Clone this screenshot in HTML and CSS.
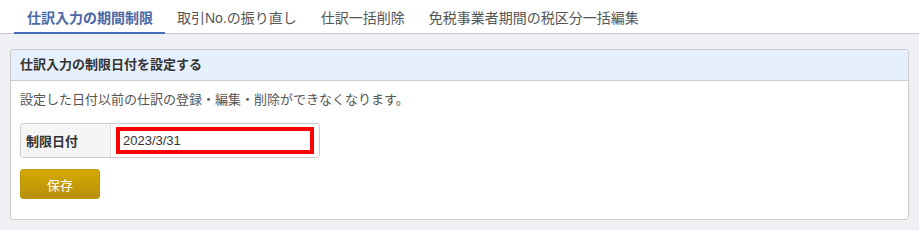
FILE: index.html
```html
<!DOCTYPE html>
<html lang="ja">
<head>
  <meta charset="UTF-8" />
  <title>仕訳入力の期間制限</title>
  <link rel="stylesheet" href="styles.css">
</head>
<body>
  <nav class="tabs">
    <a class="tab active" href="#">仕訳入力の期間制限</a>
    <a class="tab" href="#">取引No.の振り直し</a>
    <a class="tab" href="#">仕訳一括削除</a>
    <a class="tab" href="#">免税事業者期間の税区分一括編集</a>
  </nav>

  <main class="content">
    <section class="panel">
      <div class="panel-header">仕訳入力の制限日付を設定する</div>
      <div class="panel-body">
        <p class="note">設定した日付以前の仕訳の登録・編集・削除ができなくなります。</p>
        <div class="field-table">
          <div class="field-label">制限日付</div>
          <div class="field-value">
            <input type="text" class="date-input" value="2023/3/31">
          </div>
        </div>
        <button type="button" class="btn-save">保存</button>
      </div>
    </section>
  </main>
</body>
</html>
```

FILE: styles.css
```css
body {
  margin: 0;
  font-family: "Liberation Sans", "Noto Sans CJK JP", sans-serif;
  background: #eff0f4;
  color: #333;
  height: 230px;
  overflow: hidden;
}

.tabs {
  display: flex;
  background: #fff;
  border-bottom: 1px solid #c8c8c8;
  padding-left: 14px;
  height: 33px;
}

.tab {
  display: flex;
  align-items: center;
  padding: 1px 12px 0;
  font-size: 14px;
  color: #555;
  text-decoration: none;
  border-bottom: 2px solid transparent;
  margin-bottom: -1px;
}

.tab.active {
  color: #4a68a6;
  font-weight: bold;
  border-bottom-color: #4a6cb3;
  padding: 1px 12px 0 13px;
}

.content {
  padding: 15px 10px 0 10px;
}

.panel {
  background: #fff;
  border: 1px solid #ccc;
  border-radius: 3px;
  height: 171px;
  box-sizing: border-box;
}

.panel-header {
  background: #e6f0fc;
  border-bottom: 1px solid #c8ccd4;
  border-radius: 3px 3px 0 0;
  height: 30px;
  line-height: 30px;
  padding-left: 9px;
  font-size: 13px;
  font-weight: bold;
  color: #333;
}

.panel-body {
  padding: 10px 9px;
}

.note {
  margin: 0 0 14px;
  font-size: 13px;
  color: #555;
  line-height: 18px;
}

.field-table {
  display: flex;
  width: 300px;
  height: 35px;
  border: 1px solid #ccc;
  border-radius: 3px;
  box-sizing: border-box;
  overflow: hidden;
}

.field-label {
  width: 90px;
  background: #f5f5f5;
  border-right: 1px solid #ddd;
  display: flex;
  align-items: center;
  padding-left: 5px;
  box-sizing: border-box;
  font-size: 13px;
  font-weight: bold;
  color: #333;
}

.field-value {
  flex: 1;
  display: flex;
  align-items: center;
  padding-left: 5px;
}

.date-input {
  width: 198px;
  height: 27px;
  box-sizing: border-box;
  border: 4px solid #f00;
  padding: 0 3px;
  font-family: "Liberation Sans", sans-serif;
  font-size: 13px;
  color: #333;
  outline: none;
}

.btn-save {
  display: block;
  margin-top: 11px;
  width: 80px;
  height: 30px;
  border: 1px solid #b8950a;
  border-radius: 3px;
  background: linear-gradient(#d4aa00, #b8900c);
  color: #fff;
  font-family: "Noto Sans CJK JP", sans-serif;
  font-size: 13px;
  cursor: pointer;
}
```
